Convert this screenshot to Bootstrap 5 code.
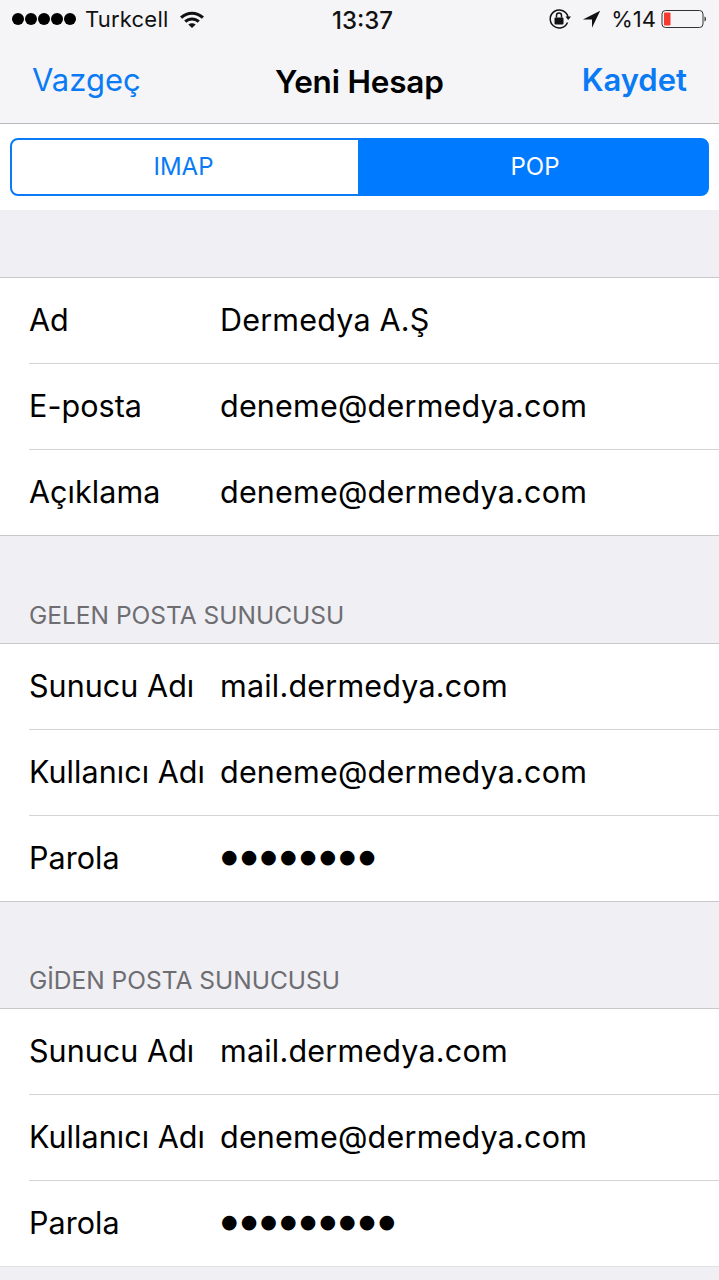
<!DOCTYPE html>
<html lang="tr">
<head>
<meta charset="UTF-8">
<meta name="viewport" content="width=device-width, initial-scale=1.0">
<title>Yeni Hesap</title>
<link href="https://cdn.jsdelivr.net/npm/bootstrap@5.3.2/dist/css/bootstrap.min.css" rel="stylesheet">
<style>
body { background: #efeff4; font-family: Inter, "Liberation Sans", sans-serif; color: #000; width: 719px; height: 1280px; overflow: hidden; }
.top-area { background: #f5f5f8; height: 124px; border-bottom: 1px solid #b9b9bc; }
.status-row { height: 38px; padding: 0 11px 0 12px; font-size: 22px; color: #111; }
.signal-dots { gap: 1px; }
.signal-dots i { width: 12px; height: 12px; border-radius: 50%; background: #000; display: block; }
.carrier { margin-left: 9px; letter-spacing: .2px; }
.wifi-icon { margin-left: 11px; }
.clock { position: absolute; left: 332px; top: 3px; font-weight: 500; font-size: 24px; }
.arrow-icon { margin-left: 10px; margin-right: 9px; }
.battery-icon { margin-left: 5px; }
.nav-row { height: 85px; padding: 0 32px 1px; font-size: 31px; position: relative; }
.nav-link-ios { color: #0a7bf5; text-decoration: none; }
.nav-title { font-weight: 600; font-size: 31.5px; position: absolute; left: 275px; top: 20px; letter-spacing: -.2px; }
.seg-wrap { background: #fff; height: 86px; padding: 14px 10px; }
.seg-wrap .btn-group { width: 699px; height: 58px; }
.seg-wrap .btn { flex: 1 1 0; font-size: 24px; border: 2px solid #0a7bf5; border-radius: 8px; color: #0a7bf5; background: #fff; padding: 0; font-weight: 400; }
.seg-wrap .btn:first-child { flex: 0 0 350px; padding-right: 3px; }
.seg-wrap .btn.active { background: #007aff; border-color: #007aff; color: #fff; padding-left: 2px; }
.gap-band { height: 68px; border-bottom: 1px solid #c9c9cd; }
.section-head { height: 109px; padding: 0 0 9px 29px; font-size: 24.5px; color: #6d6d72; border-top: 1px solid #c9c9cd; border-bottom: 1px solid #c9c9cd; }
.section-head.second-head { height: 108px; }
.form-rows .list-group-item { padding: 0 0 0 29px; border: 0; border-radius: 0; background: #fff; color: #000; font-size: 30.5px; }
.form-rows .list-group-item + .list-group-item .row-inner { border-top: 1px solid #d4d4d6; height: 86px; }
.row-inner { height: 85px; padding-bottom: 2px; }
.field-name { width: 191px; flex: none; letter-spacing: .05px; }
.field-value { letter-spacing: .2px; }
.pw-dots { font-family: "DejaVu Sans", sans-serif; font-size: 19px; letter-spacing: 3.1px; color: #000; margin: 0 0 3px 1px; }
</style>
</head>
<body>
<div class="top-area position-relative">
  <div class="status-row d-flex align-items-center">
    <div class="signal-dots d-flex"><i></i><i></i><i></i><i></i><i></i></div>
    <span class="carrier">Turkcell</span>
    <svg class="wifi-icon" width="26" height="20" viewBox="0 0 26 20"><path d="M1 7.500C8 1 18 1 25 7.500L22.800 9.700C17 4.500 9 4.500 3.200 9.700Z" fill="#111"/><path d="M5.200 11.600C10 7.500 16 7.500 20.800 11.600L18.700 13.700C15 10.700 11 10.700 7.300 13.700Z" fill="#111"/><path d="M9.300 15.500C11.500 13.800 14.500 13.800 16.700 15.500L13 19Z" fill="#111"/></svg>
    <span class="clock">13:37</span>
    <div class="ms-auto d-flex align-items-center">
      <svg width="24" height="22" viewBox="0 0 24 22"><path d="M19.500 14.500A9 9 0 1 1 20 9" fill="none" stroke="#111" stroke-width="1.500"/><path d="M17.500 8.500H23L20.200 12Z" fill="#111"/><rect x="6.500" y="9.500" width="9" height="7" rx="1" fill="#111"/><path d="M8.500 9.500V7.500A2.500 2.500 0 0 1 13.500 7.500V9.500" fill="none" stroke="#111" stroke-width="1.500"/></svg>
      <svg class="arrow-icon" width="20" height="20" viewBox="0 0 22 20"><path d="M20 1L1 10.500H11V19.500Z" fill="#111"/></svg>
      <span>%14</span>
      <svg class="battery-icon" width="47" height="20" viewBox="0 0 47 20"><rect x="1" y="1.500" width="41" height="17" rx="3.500" fill="none" stroke="#333" stroke-width="1"/><rect x="3" y="3.500" width="6.500" height="13" rx="1" fill="#f63a30"/><path d="M43.500 7.500C45.500 8 45.500 12 43.500 12.500Z" fill="#333"/></svg>
    </div>
  </div>
  <div class="nav-row d-flex justify-content-between align-items-center">
    <a class="nav-link-ios" href="#">Vazgeç</a>
    <span class="nav-title">Yeni Hesap</span>
    <a class="nav-link-ios fw-semibold" href="#">Kaydet</a>
  </div>
</div>
<div class="seg-wrap">
  <div class="btn-group" role="group">
    <button type="button" class="btn">IMAP</button>
    <button type="button" class="btn active">POP</button>
  </div>
</div>
<div class="gap-band"></div>
<ul class="list-group form-rows">
  <li class="list-group-item"><div class="row-inner d-flex align-items-center"><span class="field-name">Ad</span><span class="field-value">Dermedya A.Ş</span></div></li>
  <li class="list-group-item"><div class="row-inner d-flex align-items-center"><span class="field-name">E-posta</span><span class="field-value">deneme@dermedya.com</span></div></li>
  <li class="list-group-item"><div class="row-inner d-flex align-items-center"><span class="field-name">Açıklama</span><span class="field-value">deneme@dermedya.com</span></div></li>
</ul>
<div class="section-head d-flex align-items-end">GELEN POSTA SUNUCUSU</div>
<ul class="list-group form-rows">
  <li class="list-group-item"><div class="row-inner d-flex align-items-center"><span class="field-name">Sunucu Adı</span><span class="field-value">mail.dermedya.com</span></div></li>
  <li class="list-group-item"><div class="row-inner d-flex align-items-center"><span class="field-name">Kullanıcı Adı</span><span class="field-value">deneme@dermedya.com</span></div></li>
  <li class="list-group-item"><div class="row-inner d-flex align-items-center"><span class="field-name">Parola</span><span class="pw-dots">●●●●●●●●</span></div></li>
</ul>
<div class="section-head second-head d-flex align-items-end">GİDEN POSTA SUNUCUSU</div>
<ul class="list-group form-rows">
  <li class="list-group-item"><div class="row-inner d-flex align-items-center"><span class="field-name">Sunucu Adı</span><span class="field-value">mail.dermedya.com</span></div></li>
  <li class="list-group-item"><div class="row-inner d-flex align-items-center"><span class="field-name">Kullanıcı Adı</span><span class="field-value">deneme@dermedya.com</span></div></li>
  <li class="list-group-item"><div class="row-inner d-flex align-items-center"><span class="field-name">Parola</span><span class="pw-dots">●●●●●●●●●</span></div></li>
</ul>
<div class="gap-band border-top"></div>
<script src="https://cdn.jsdelivr.net/npm/bootstrap@5.3.2/dist/js/bootstrap.bundle.min.js"></script>
</body>
</html>
